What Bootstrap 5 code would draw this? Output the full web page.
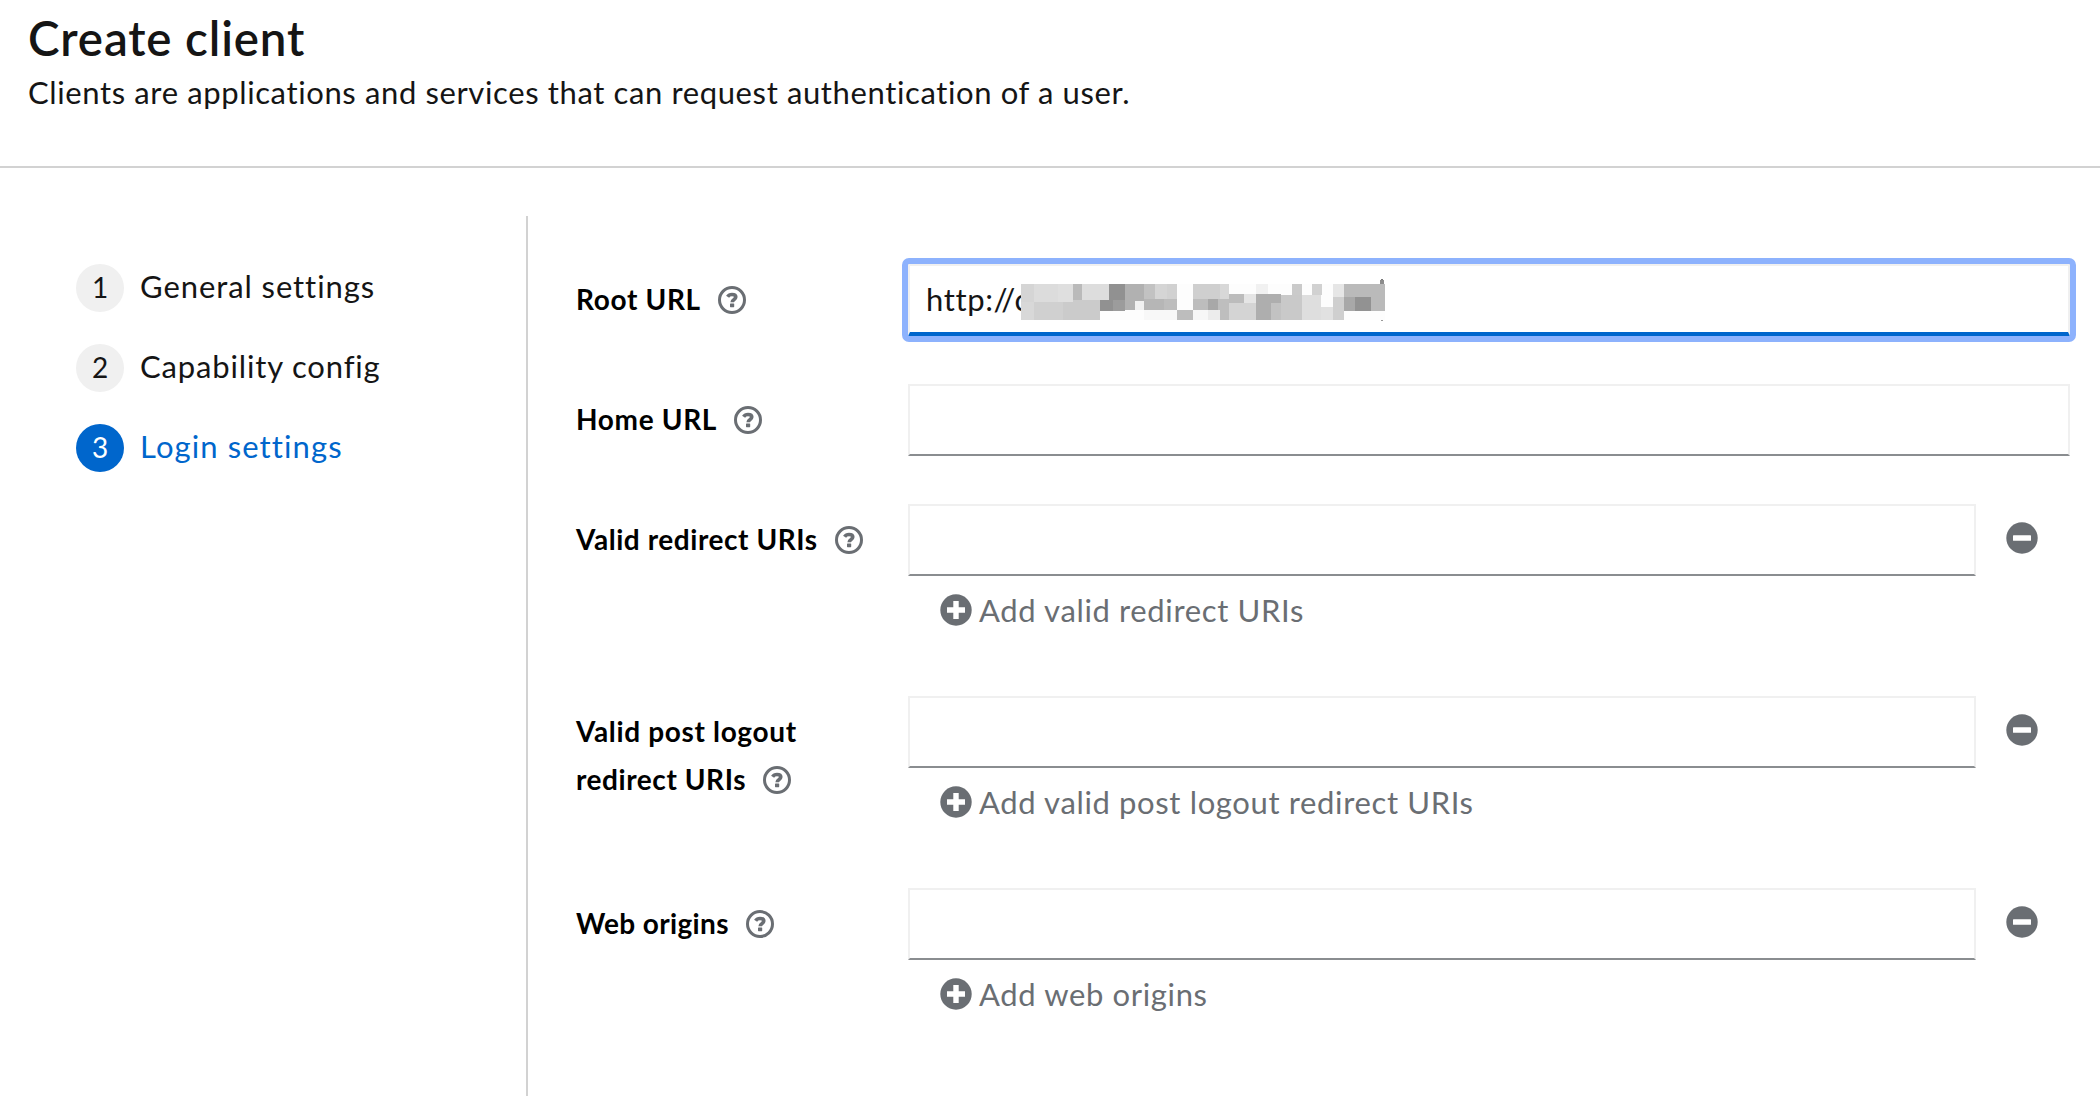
<!DOCTYPE html>
<html lang="en">
<head>
<meta charset="utf-8">
<meta name="viewport" content="width=device-width, initial-scale=1">
<title>Create client</title>
<link href="https://cdn.jsdelivr.net/npm/bootstrap@5.3.0/dist/css/bootstrap.min.css" rel="stylesheet">
<style>
body{font-family:Lato,"Open Sans",sans-serif;font-size:31px;line-height:48px;letter-spacing:.62px;color:#151515;background:#fff;font-variant-ligatures:none}
.page{height:1096px;overflow:hidden}
.page-head{height:168px;padding:7px 28px 0;border-bottom:2px solid #d2d2d2}
.page-head h1{font-size:47.5px;font-weight:600;line-height:62px;letter-spacing:.85px;margin:0 0 -1px}
.steps{width:528px;margin-top:48px;padding:48px 0 0 76px;border-right:2px solid #d2d2d2;gap:32px}
.step{height:48px;gap:16px;color:#151515;text-decoration:none;letter-spacing:.92px}
.step .label-text{padding-bottom:4px}
.step .num{width:48px;height:48px;font-size:28px;letter-spacing:0;background:#f0f0f0;padding-bottom:2px}
.step.current{color:#06c;letter-spacing:1.1px}
.step.current .num{background:#06c;color:#fff}
.fields{padding:96px 30px 0 48px}
.field{margin-bottom:48px}
.field.multi{margin-bottom:62px}
.field-label{width:332px;padding-top:11px;font-size:28px;font-weight:700;color:#000;line-height:48px;letter-spacing:.56px}
.help{width:28px;height:28px;margin-left:10px;vertical-align:-4px}
.url-input{height:72px;border:2px solid #f0f0f0;border-bottom-color:#8a8d90;padding:0 16px 2px}
.url-input.active{border-bottom:4px solid #06c;outline:6px solid #8db2fd;border-radius:1px;padding-bottom:0}
.mosaic{left:111px;top:13px;width:364px;height:42px}
.remove{width:94px;height:72px;padding:0 2px 4px 0;border:0;background:none}
.add{border:0;background:none;padding:10px 0 0 32px;color:#6a6e73;gap:7px;letter-spacing:.64px}
.glyph{width:32px;height:32px;color:#6a6e73}
.ls-wide{letter-spacing:.66px}
.ls-slim{letter-spacing:.84px}
.ls-tight{letter-spacing:.35px}
</style>
</head>
<body>
<svg class="d-none" xmlns="http://www.w3.org/2000/svg">
  <symbol id="help" viewBox="0 0 28 28">
    <circle cx="14" cy="14" r="12.5" fill="none" stroke="#6a6e73" stroke-width="3"/>
    <path d="M9.6 10.7C10.7 9 12.1 8.5 14 8.5c2.2 0 3.8.9 3.8 2.6 0 2.5-3.6 2.3-3.6 5.2" fill="none" stroke="#6a6e73" stroke-width="3.6"/>
    <rect x="12" y="17.5" width="4.2" height="3.7" rx=".6" fill="#6a6e73"/>
  </symbol>
  <symbol id="minus" viewBox="0 0 32 32">
    <circle cx="16" cy="16" r="15.7" fill="currentColor"/><rect x="7" y="13.2" width="18" height="5.6" rx=".6" fill="#fff"/>
  </symbol>
  <symbol id="plus" viewBox="0 0 32 32">
    <circle cx="16" cy="16" r="15.7" fill="currentColor"/><path d="M13.3 7h5.4v6.3H25v5.4h-6.3V25h-5.4v-6.3H7v-5.4h6.3z" fill="#fff"/>
  </symbol>
</svg>

<div class="page d-flex flex-column">
  <header class="page-head flex-shrink-0">
    <h1>Create client</h1>
    <p class="m-0">Clients are applications and services that can request authentication of a user.</p>
  </header>
  <div class="d-flex flex-grow-1">
    <nav class="steps d-flex flex-column flex-shrink-0">
      <a class="step d-flex align-items-center" href="#"><span class="num rounded-circle d-flex align-items-center justify-content-center">1</span><span class="label-text">General settings</span></a>
      <a class="step d-flex align-items-center" href="#"><span class="num rounded-circle d-flex align-items-center justify-content-center">2</span><span class="label-text ls-slim">Capability config</span></a>
      <a class="step current d-flex align-items-center" href="#"><span class="num rounded-circle d-flex align-items-center justify-content-center">3</span><span class="label-text">Login settings</span></a>
    </nav>
    <main class="fields flex-grow-1">
      <div class="field d-flex">
        <div class="field-label flex-shrink-0"><span class="ls-wide">Root URL</span> <svg class="help"><use href="#help"/></svg></div>
        <div class="url-input active flex-grow-1 position-relative d-flex align-items-center">http://c
          <svg class="mosaic position-absolute" viewBox="3 27 1092 126" preserveAspectRatio="none" shape-rendering="crispEdges">
            <rect x="3" y="42" width="1092" height="108" fill="#fdfdfd"/>
            <rect x="3" y="42" width="39" height="54" fill="#d5d5d5"/><rect x="42" y="42" width="72" height="54" fill="#dcdcdc"/><rect x="114" y="42" width="45" height="54" fill="#dfdfdf"/><rect x="159" y="42" width="27" height="48" fill="#bababa"/><rect x="186" y="42" width="81" height="48" fill="#dddddd"/><rect x="267" y="42" width="48" height="48" fill="#919191"/><rect x="315" y="42" width="57" height="78" fill="#b1b1b1"/><rect x="372" y="42" width="33" height="45" fill="#c2c2c2"/><rect x="405" y="42" width="36" height="45" fill="#d5d5d5"/><rect x="441" y="42" width="30" height="45" fill="#d1d1d1"/>
            <rect x="3" y="96" width="39" height="54" fill="#d8d8d8"/><rect x="42" y="96" width="87" height="54" fill="#d0d0d0"/><rect x="129" y="96" width="111" height="54" fill="#cbcbcb"/><rect x="159" y="90" width="81" height="60" fill="#cbcbcb"/><rect x="240" y="90" width="39" height="33" fill="#919191"/><rect x="279" y="90" width="36" height="33" fill="#9c9c9c"/><rect x="345" y="93" width="27" height="27" fill="#f1f1f1"/><rect x="372" y="87" width="60" height="33" fill="#b6b6b6"/><rect x="432" y="87" width="39" height="33" fill="#bdbdbd"/><rect x="372" y="120" width="99" height="30" fill="#f8f8f8"/><rect x="471" y="120" width="48" height="30" fill="#bdbdbd"/>
            <rect x="519" y="42" width="81" height="45" fill="#cfcfcf"/><rect x="600" y="42" width="27" height="45" fill="#d8d8d8"/><rect x="519" y="87" width="45" height="33" fill="#bdbdbd"/><rect x="564" y="87" width="30" height="33" fill="#a8a8a8"/><rect x="594" y="87" width="33" height="33" fill="#bebebe"/><rect x="519" y="120" width="45" height="30" fill="#f7f7f7"/><rect x="564" y="120" width="36" height="30" fill="#ececec"/><rect x="600" y="120" width="27" height="30" fill="#bebebe"/><rect x="627" y="72" width="45" height="27" fill="#bcbcbc"/><rect x="672" y="72" width="36" height="27" fill="#e5e5e5"/><rect x="627" y="99" width="81" height="51" fill="#d4d4d4"/>
            <rect x="708" y="42" width="36" height="30" fill="#f1f1f1"/><rect x="708" y="72" width="45" height="78" fill="#aeaeae"/><rect x="753" y="72" width="30" height="27" fill="#aeaeae"/><rect x="753" y="99" width="30" height="51" fill="#c2c2c2"/><rect x="783" y="75" width="63" height="75" fill="#c9c9c9"/><rect x="816" y="42" width="30" height="33" fill="#cacaca"/><rect x="846" y="75" width="57" height="75" fill="#dedede"/><rect x="876" y="42" width="30" height="33" fill="#d1d1d1"/><rect x="903" y="111" width="36" height="39" fill="#e1e1e1"/><rect x="939" y="42" width="33" height="39" fill="#e6e6e6"/><rect x="939" y="81" width="33" height="69" fill="#cfcfcf"/>
            <rect x="972" y="42" width="123" height="81" fill="#bababa"/><rect x="972" y="81" width="33" height="42" fill="#a8a8a8"/><rect x="1005" y="81" width="48" height="42" fill="#929292"/><rect x="1080" y="30" width="12" height="12" fill="#8b8b8b"/><rect x="1083" y="27" width="6" height="3" fill="#777777"/><rect x="1083" y="150" width="6" height="3" fill="#999999"/>
          </svg>
        </div>
      </div>
      <div class="field d-flex">
        <div class="field-label flex-shrink-0"><span class="ls-wide">Home URL</span> <svg class="help"><use href="#help"/></svg></div>
        <div class="url-input flex-grow-1"></div>
      </div>
      <div class="field multi d-flex">
        <div class="field-label flex-shrink-0">Valid redirect URIs <svg class="help"><use href="#help"/></svg></div>
        <div class="flex-grow-1">
          <div class="d-flex"><div class="url-input flex-grow-1"></div><button class="remove d-flex align-items-center justify-content-center" type="button" aria-label="Remove"><svg class="glyph"><use href="#minus"/></svg></button></div>
          <button class="add d-flex align-items-center" type="button"><svg class="glyph"><use href="#plus"/></svg>Add valid redirect URIs</button>
        </div>
      </div>
      <div class="field multi d-flex">
        <div class="field-label flex-shrink-0"><span class="ls-wide">Valid post logout</span><br>redirect URIs <svg class="help"><use href="#help"/></svg></div>
        <div class="flex-grow-1">
          <div class="d-flex"><div class="url-input flex-grow-1"></div><button class="remove d-flex align-items-center justify-content-center" type="button" aria-label="Remove"><svg class="glyph"><use href="#minus"/></svg></button></div>
          <button class="add d-flex align-items-center" type="button"><svg class="glyph"><use href="#plus"/></svg>Add valid post logout redirect URIs</button>
        </div>
      </div>
      <div class="field multi d-flex">
        <div class="field-label flex-shrink-0"><span class="ls-tight">Web origins</span> <svg class="help"><use href="#help"/></svg></div>
        <div class="flex-grow-1">
          <div class="d-flex"><div class="url-input flex-grow-1"></div><button class="remove d-flex align-items-center justify-content-center" type="button" aria-label="Remove"><svg class="glyph"><use href="#minus"/></svg></button></div>
          <button class="add d-flex align-items-center" type="button"><svg class="glyph"><use href="#plus"/></svg>Add web origins</button>
        </div>
      </div>
    </main>
  </div>
</div>
<script src="https://cdn.jsdelivr.net/npm/bootstrap@5.3.0/dist/js/bootstrap.bundle.min.js"></script>
</body>
</html>
